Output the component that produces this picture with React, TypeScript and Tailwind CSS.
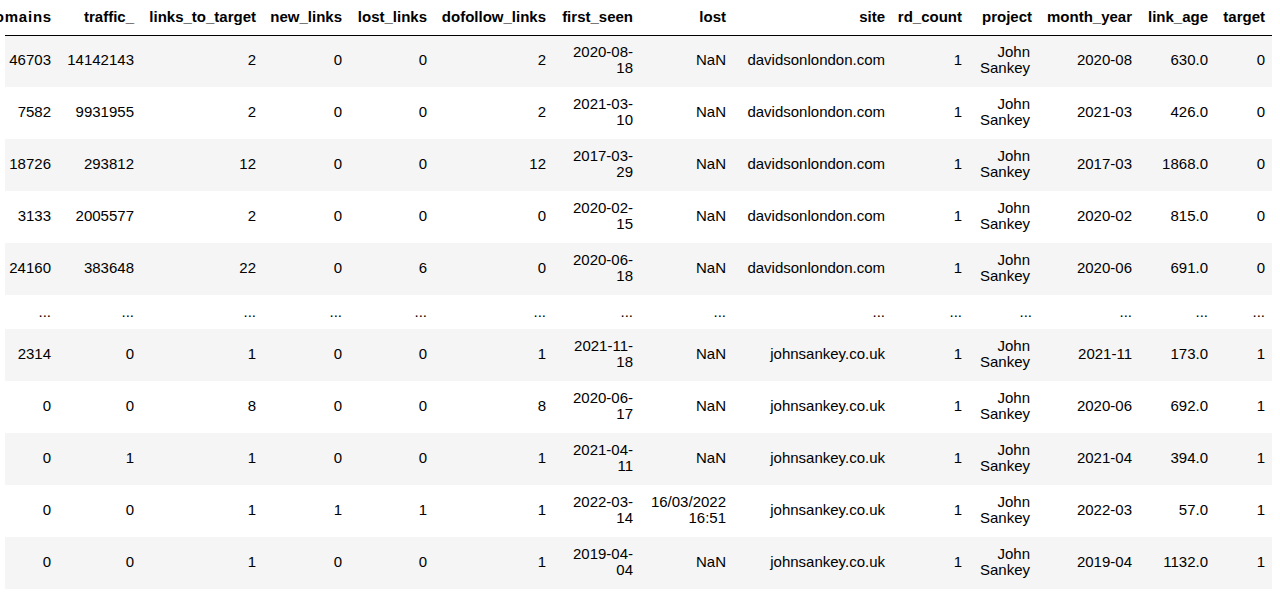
type Cell = string | string[];

const columns = [
  { name: "domains", w: "w-[53px]" },
  { name: "traffic_", w: "w-[83px]" },
  { name: "links_to_target", w: "w-[122px]" },
  { name: "new_links", w: "w-[86px]" },
  { name: "lost_links", w: "w-[85px]" },
  { name: "dofollow_links", w: "w-[119px]" },
  { name: "first_seen", w: "w-[87px]" },
  { name: "lost", w: "w-[93px]" },
  { name: "site", w: "w-[159px]" },
  { name: "rd_count", w: "w-[77px]" },
  { name: "project", w: "w-[70px]" },
  { name: "month_year", w: "w-[100px]" },
  { name: "link_age", w: "w-[76px]" },
  { name: "target", w: "w-[57px]" },
];

const john = ["John", "Sankey"];

const top: Cell[][] = [
  ["46703", "14142143", "2", "0", "0", "2", ["2020-08-", "18"], "NaN", "davidsonlondon.com", "1", john, "2020-08", "630.0", "0"],
  ["7582", "9931955", "2", "0", "0", "2", ["2021-03-", "10"], "NaN", "davidsonlondon.com", "1", john, "2021-03", "426.0", "0"],
  ["18726", "293812", "12", "0", "0", "12", ["2017-03-", "29"], "NaN", "davidsonlondon.com", "1", john, "2017-03", "1868.0", "0"],
  ["3133", "2005577", "2", "0", "0", "0", ["2020-02-", "15"], "NaN", "davidsonlondon.com", "1", john, "2020-02", "815.0", "0"],
  ["24160", "383648", "22", "0", "6", "0", ["2020-06-", "18"], "NaN", "davidsonlondon.com", "1", john, "2020-06", "691.0", "0"],
];

const bottom: Cell[][] = [
  ["2314", "0", "1", "0", "0", "1", ["2021-11-", "18"], "NaN", "johnsankey.co.uk", "1", john, "2021-11", "173.0", "1"],
  ["0", "0", "8", "0", "0", "8", ["2020-06-", "17"], "NaN", "johnsankey.co.uk", "1", john, "2020-06", "692.0", "1"],
  ["0", "1", "1", "0", "0", "1", ["2021-04-", "11"], "NaN", "johnsankey.co.uk", "1", john, "2021-04", "394.0", "1"],
  ["0", "0", "1", "1", "1", "1", ["2022-03-", "14"], ["16/03/2022", "16:51"], "johnsankey.co.uk", "1", john, "2022-03", "57.0", "1"],
  ["0", "0", "1", "0", "0", "1", ["2019-04-", "04"], "NaN", "johnsankey.co.uk", "1", john, "2019-04", "1132.0", "1"],
];

const Value = ({ v }: { v: Cell }) => {
  if (Array.isArray(v)) {
    return (
      <>
        {v[0]}
        <br />
        {v[1]}
      </>
    );
  }
  return <>{v}</>;
};

const DataRow = ({ row }: { row: Cell[] }) => (
  <tr className="h-[52px] odd:bg-[#f5f5f5]">
    {row.map((v, i) => (
      <td
        key={i}
        className={`pl-0 pb-[2px] text-right align-middle whitespace-nowrap ${i === 10 ? "pr-[9px]" : "pr-[7px]"}`}
      >
        <Value v={v} />
      </td>
    ))}
  </tr>
);

export default function App() {
  return (
    <div className="w-[1280px] h-[596px] bg-white overflow-hidden pl-[5px] font-['Liberation_Sans',Arial,sans-serif] text-[15px] leading-[16px] text-black">
      <table className="table-fixed border-collapse w-[1267px]">
        <colgroup>
          {columns.map((c) => (
            <col key={c.name} className={c.w} />
          ))}
        </colgroup>
        <thead>
          <tr className="h-[35px] border-b border-black">
            {columns.map((c, i) => (
              <th
                key={c.name}
                className={`pl-0 font-bold text-right align-middle whitespace-nowrap ${i === 0 ? "pr-[6px]" : "pr-[7px]"}`}
              >
                {i === 0 ? (
                  <div className="flex justify-end tracking-[0.8px]">{c.name}</div>
                ) : (
                  c.name
                )}
              </th>
            ))}
          </tr>
        </thead>
        <tbody>
          {top.map((r, i) => (
            <DataRow key={"t" + i} row={r} />
          ))}
          <tr className="h-[34px] odd:bg-[#f5f5f5]">
            {columns.map((c) => (
              <td key={c.name} className="pr-[7px] text-right align-middle">
                ...
              </td>
            ))}
          </tr>
          {bottom.map((r, i) => (
            <DataRow key={"b" + i} row={r} />
          ))}
        </tbody>
      </table>
    </div>
  );
}
